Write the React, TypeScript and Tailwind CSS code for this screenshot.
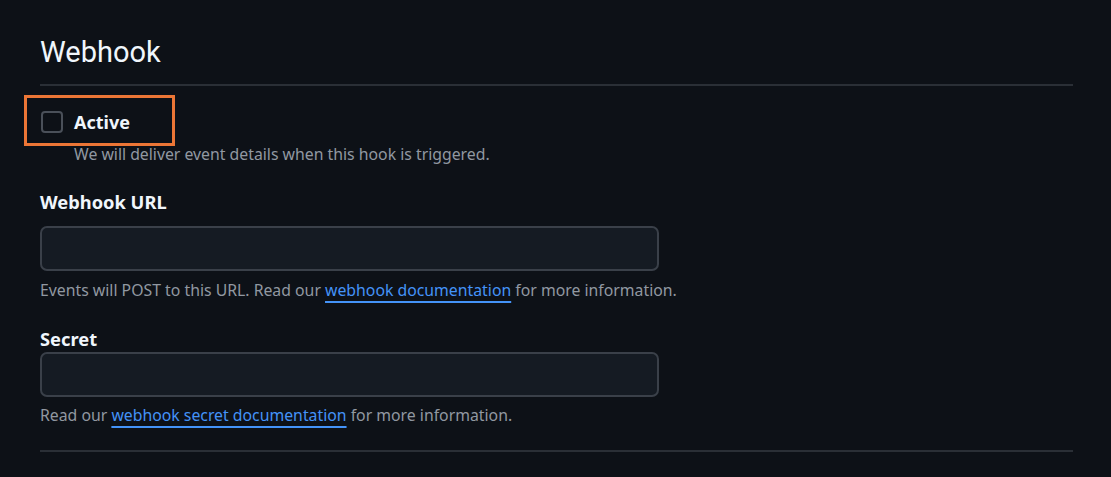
import React from "react";

export default function App() {
  return (
    <div
      className="w-[1111px] h-[477px] bg-[#0d1117] text-[#f0f6fc] overflow-hidden"
      style={{ fontFamily: '"Noto Sans", Roboto, sans-serif' }}
    >
      <div className="pl-[40px] pr-[38px] pt-[34px]">
        <h2
          className="text-[29px] leading-[36px] font-normal pb-[14px] border-b-2 border-[#2a2f36]"
          style={{ fontFamily: 'Roboto, sans-serif' }}
        >
          Webhook
        </h2>

        <div className="mt-[9px] ml-[-16px] w-[151px] h-[51px] border-[3px] border-[#ec7636] flex items-center pl-[14px] gap-[11px]">
          <span className="w-[22px] h-[22px] rounded-[4px] border-2 border-[#4a5059] bg-[#0d1117] mt-[2px]" />
          <span className="text-[18px] font-bold leading-none mt-[3px]">Active</span>
        </div>
        <p className="ml-[34px] mt-[-1px] text-[15.8px] leading-[18px] text-[#9198a1]">
          We will deliver event details when this hook is triggered.
        </p>

        <label className="block mt-[27px] text-[18.3px] font-bold leading-[24px]">
          Webhook URL
        </label>
        <div className="mt-[12px] w-[619px] h-[45px] rounded-[7px] border-2 border-[#3a4049] bg-[#151b23]" />
        <p className="mt-[9px] text-[15.8px] leading-[20px] text-[#9198a1]">
          Events will POST to this URL. Read our{" "}
          <a className="text-[#4493f8] underline underline-offset-[5px] decoration-[1.5px]">webhook documentation</a>{" "}
          for more information.
        </p>

        <label className="block mt-[27px] text-[18.3px] font-bold leading-[24px]">
          Secret
        </label>
        <div className="mt-[1px] w-[619px] h-[45px] rounded-[7px] border-2 border-[#3a4049] bg-[#151b23]" />
        <p className="mt-[8px] text-[15.8px] leading-[20px] text-[#9198a1]">
          Read our{" "}
          <a className="text-[#4493f8] underline underline-offset-[5px] decoration-[1.5px]">webhook secret documentation</a>{" "}
          for more information.
        </p>

        <div className="mt-[25px] border-b-2 border-[#2a2f36]" />
      </div>
    </div>
  );
}
